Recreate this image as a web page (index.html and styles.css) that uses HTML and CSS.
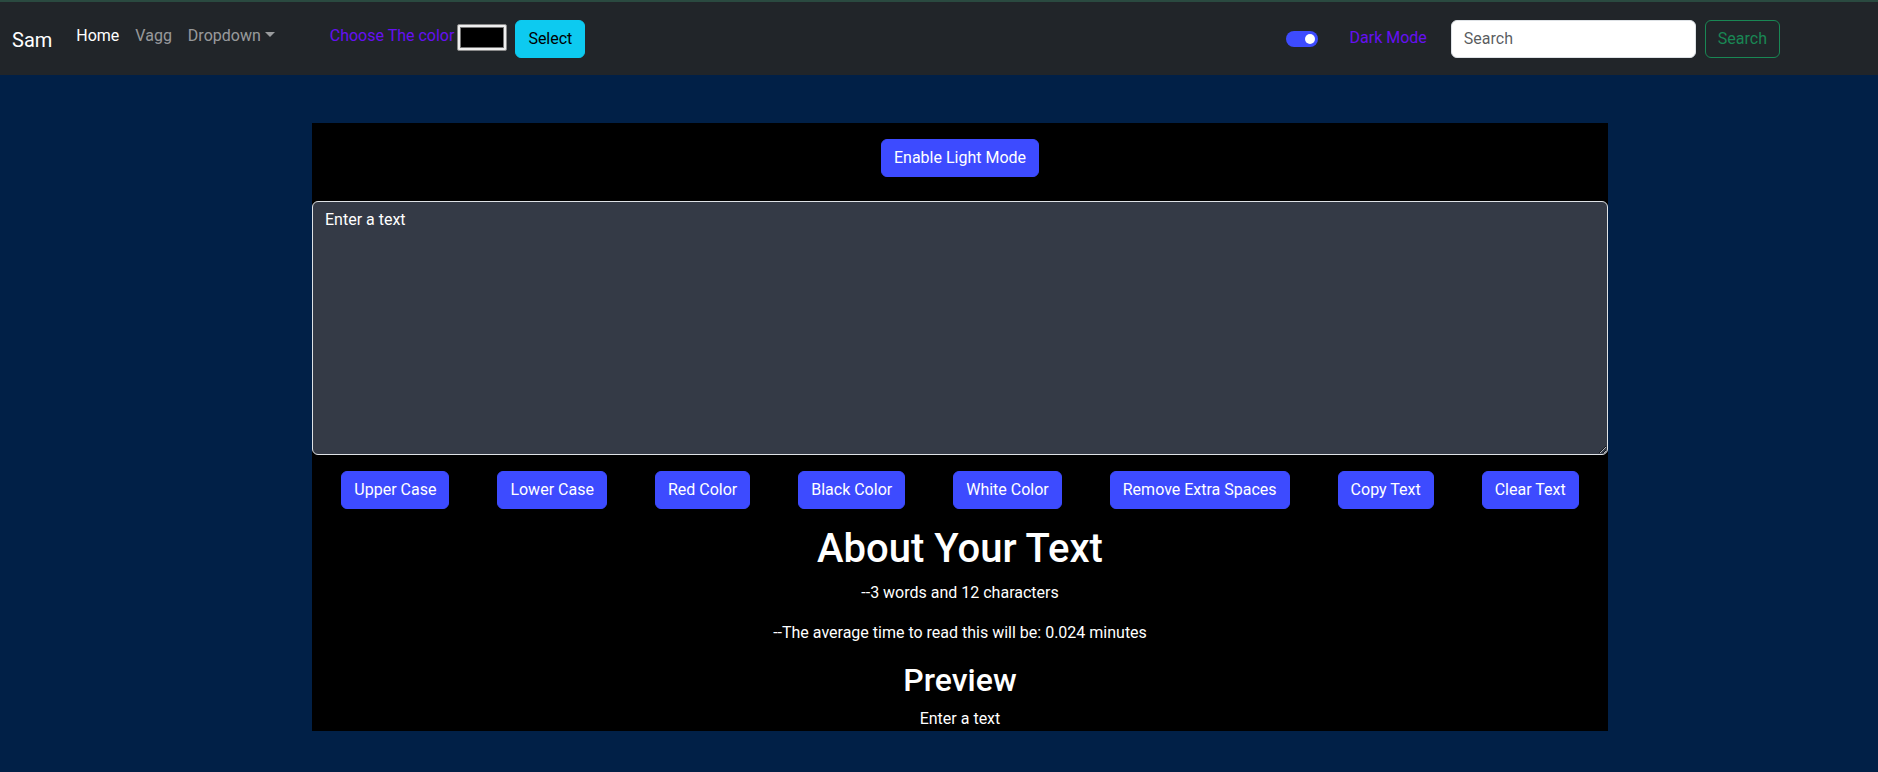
FILE: index.html
```html
<!DOCTYPE html>
<html lang="en">
<head>
<meta charset="utf-8">
<title>TextUtils</title>
<link rel="stylesheet" href="styles.css">
</head>
<body>
<nav class="navbar">
  <a class="brand" href="#">Sam</a>
  <ul class="nav-links">
    <li><a class="nav-link active" href="#">Home</a></li>
    <li><a class="nav-link" href="#">Vagg</a></li>
    <li><a class="nav-link dropdown" href="#">Dropdown</a></li>
  </ul>
  <div class="color-picker">
    <label class="purple-label">Choose The color</label>
    <span class="color-swatch"><span class="swatch-fill"></span></span>
    <button class="btn btn-info">Select</button>
  </div>
  <div class="right-group">
    <span class="switch"><span class="knob"></span></span>
    <span class="purple-label dark-label">Dark Mode</span>
    <form class="search-form">
      <input class="search-input" type="search" placeholder="Search">
      <button class="btn btn-outline-success" type="button">Search</button>
    </form>
  </div>
</nav>

<main class="container">
  <button class="btn btn-primary">Enable Light Mode</button>
  <textarea class="text-box" rows="10">Enter a text</textarea>
  <div class="action-row">
    <button class="btn btn-primary">Upper Case</button>
    <button class="btn btn-primary">Lower Case</button>
    <button class="btn btn-primary">Red Color</button>
    <button class="btn btn-primary">Black Color</button>
    <button class="btn btn-primary">White Color</button>
    <button class="btn btn-primary">Remove Extra Spaces</button>
    <button class="btn btn-primary">Copy Text</button>
    <button class="btn btn-primary">Clear Text</button>
  </div>
  <h1 class="summary-title">About Your Text</h1>
  <p class="info">--3 words and 12 characters</p>
  <p class="info">--The average time to read this will be: 0.024 minutes</p>
  <h2 class="preview-title">Preview</h2>
  <p class="preview-text">Enter a text</p>
</main>
</body>
</html>
```

FILE: styles.css
```css
* { box-sizing: border-box; }

html, body {
  margin: 0;
  padding: 0;
}

body {
  background: #012047;
  font-family: Roboto, "Liberation Sans", sans-serif;
  font-size: 16px;
  line-height: 1.5;
  color: #fff;
}

/* ---------- navbar ---------- */
.navbar {
  display: flex;
  align-items: center;
  height: 75px;
  border-top: 2px solid #2a4a40;
  background: #212529;
  padding: 0 12px;
}

.brand {
  font-size: 20px;
  line-height: 30px;
  color: #fff;
  text-decoration: none;
  margin-right: 16px;
  padding-top: 2px;
}

.nav-links {
  display: flex;
  list-style: none;
  margin: 0 0 5px 0;
  padding: 0;
}

.nav-link {
  display: block;
  padding: 0 8px;
  color: rgba(255, 255, 255, 0.55);
  text-decoration: none;
}

.nav-link.active { color: #fff; }

.dropdown::after {
  content: "";
  display: inline-block;
  margin-left: 4px;
  vertical-align: 4px;
  border-top: 5px solid;
  border-right: 5px solid transparent;
  border-left: 5px solid transparent;
}

.color-picker {
  display: flex;
  align-items: center;
  margin-left: 47px;
}

.purple-label {
  color: #6610f2;
}

.color-picker .purple-label {
  margin-bottom: 5px;
}

.color-swatch {
  display: block;
  width: 50px;
  height: 27px;
  margin: 0 8px 3px 3px;
  padding: 2px;
  background: #efefef;
  border: 1px solid #8a8a8a;
  border-radius: 2px;
}

.swatch-fill {
  display: block;
  width: 100%;
  height: 100%;
  background: #000;
  border: 1px solid #777;
}

.btn {
  font-family: inherit;
  font-size: 16px;
  line-height: 24px;
  padding: 6px 12px;
  border: 1px solid transparent;
  border-radius: 6px;
  cursor: pointer;
}

.btn-info {
  background: #0dcaf0;
  border-color: #0dcaf0;
  color: #000;
  margin-top: 1px;
}

.right-group {
  display: flex;
  align-items: center;
  margin-left: auto;
  margin-right: 86px;
}

.switch {
  position: relative;
  display: inline-block;
  width: 32px;
  height: 16px;
  border-radius: 8px;
  background: #3d4bff;
  margin-right: 32px;
}

.knob {
  position: absolute;
  top: 3px;
  right: 3px;
  width: 10px;
  height: 10px;
  border-radius: 50%;
  background: #fff;
}

.dark-label {
  margin-right: 24px;
  margin-bottom: 1px;
}

.search-form {
  display: flex;
  align-items: center;
}

.search-input {
  width: 245px;
  height: 38px;
  padding: 6px 12px;
  font-family: inherit;
  font-size: 16px;
  color: #212529;
  background: #fff;
  border: 1px solid #dee2e6;
  border-radius: 6px;
  margin-right: 9px;
}

.search-input::placeholder {
  color: rgba(33, 37, 41, 0.75);
}

.btn-outline-success {
  background: transparent;
  border-color: #198754;
  color: #198754;
}

/* ---------- main ---------- */
.container {
  width: 1296px;
  margin: 48px 0 0 312px;
  background: #000;
  padding: 16px 0 0;
  text-align: center;
}

.btn-primary {
  background: #3d4bff;
  border-color: #3d4bff;
  color: #fff;
}

.text-box {
  display: block;
  width: 100%;
  height: 254px;
  margin: 24px 0 0;
  padding: 6px 12px;
  font-family: inherit;
  font-size: 16px;
  line-height: 24px;
  color: #fff;
  background: #343a46;
  border: 1px solid #dee2e6;
  border-radius: 6px;
}

.action-row {
  display: flex;
  justify-content: center;
  margin-top: 16px;
}

.action-row .btn {
  margin: 0 24px;
}

.summary-title {
  font-size: 40px;
  font-weight: 500;
  line-height: 48px;
  margin: 16px 0 8px;
}

.info {
  margin: 0 0 16px;
}

.preview-title {
  font-size: 32px;
  font-weight: 500;
  line-height: 38.4px;
  margin: 0 0 8px;
}

.preview-text {
  margin: 0;
}
```
